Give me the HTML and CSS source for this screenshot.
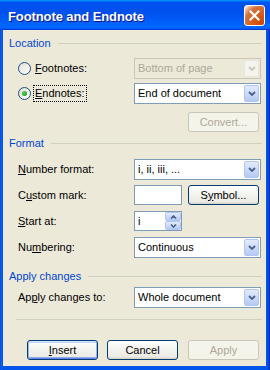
FILE: index.html
```html
<!DOCTYPE html>
<html>
<head>
<meta charset="utf-8">
<link rel="stylesheet" href="styles.css">
</head>
<body>
<div class="window">
  <div class="titlebar">
    <span class="title">Footnote and Endnote</span>
    <div class="close">
      <svg width="11" height="11" viewBox="0 0 11 11"><path d="M1.5 1.5 L9.5 9.5 M9.5 1.5 L1.5 9.5" stroke="#fff" stroke-width="2.2" stroke-linecap="square"/></svg>
    </div>
  </div>
  <div class="client">
    <div class="group-head"><span>Location</span><i class="rule"></i></div>
    <div class="row first">
      <div class="radio-label"><span class="radio"></span><span class="lbl"><u>F</u>ootnotes:</span></div>
      <div class="combo disabled"><span class="val">Bottom of page</span><span class="drop"><svg width="8" height="5" viewBox="0 0 8 5"><path d="M1 1 L4 4 L7 1" fill="none" stroke="#C9C7BA" stroke-width="1.8"/></svg></span></div>
    </div>
    <div class="row tight">
      <div class="radio-label"><span class="radio checked"></span><span class="lbl focus"><u>E</u>ndnotes:</span></div>
      <div class="combo"><span class="val">End of document</span><span class="drop"><svg width="8" height="5" viewBox="0 0 8 5"><path d="M1 1 L4 4 L7 1" fill="none" stroke="#4D6185" stroke-width="1.8"/></svg></span></div>
    </div>
    <div class="row convert-row">
      <span></span>
      <div class="btn disabled end">Convert...</div>
    </div>
    <div class="group-head format-head"><span>Format</span><i class="rule"></i></div>
    <div class="row numfmt">
      <span class="plain"><u>N</u>umber format:</span>
      <div class="combo"><span class="val">i, ii, iii, ...</span><span class="drop"><svg width="8" height="5" viewBox="0 0 8 5"><path d="M1 1 L4 4 L7 1" fill="none" stroke="#4D6185" stroke-width="1.8"/></svg></span></div>
    </div>
    <div class="row custom">
      <span class="plain">C<u>u</u>stom mark:</span>
      <div class="pair"><div class="textbox"></div><div class="btn symbol">S<u>y</u>mbol...</div></div>
    </div>
    <div class="row mid">
      <span class="plain"><u>S</u>tart at:</span>
      <div class="spinbox"><span class="val">i</span>
        <span class="spins">
          <span class="spin"><svg width="7" height="4" viewBox="0 0 7 4"><path d="M1 3.5 L3.5 1 L6 3.5" fill="none" stroke="#4D6185" stroke-width="1.6"/></svg></span>
          <span class="spin"><svg width="7" height="4" viewBox="0 0 7 4"><path d="M1 0.5 L3.5 3 L6 0.5" fill="none" stroke="#4D6185" stroke-width="1.6"/></svg></span>
        </span>
      </div>
    </div>
    <div class="row mid">
      <span class="plain">Nu<u>m</u>bering:</span>
      <div class="combo"><span class="val">Continuous</span><span class="drop"><svg width="8" height="5" viewBox="0 0 8 5"><path d="M1 1 L4 4 L7 1" fill="none" stroke="#4D6185" stroke-width="1.8"/></svg></span></div>
    </div>
    <div class="group-head apply-head"><span>Apply changes</span><i class="rule"></i></div>
    <div class="row tight">
      <span class="plain">Ap<u>p</u>ly changes to:</span>
      <div class="combo"><span class="val">Whole document</span><span class="drop"><svg width="8" height="5" viewBox="0 0 8 5"><path d="M1 1 L4 4 L7 1" fill="none" stroke="#4D6185" stroke-width="1.8"/></svg></span></div>
    </div>
    <div class="separator"></div>
    <div class="buttons">
      <div class="btn default"><u>I</u>nsert</div>
      <div class="btn">Cancel</div>
      <div class="btn disabled apply">Apply</div>
    </div>
  </div>
</div>
</body>
</html>
```
FILE: styles.css
```css
html, body {
  margin: 0;
  padding: 0;
  background: #0A57E8;
}
body {
  width: 270px;
  height: 370px;
  overflow: hidden;
  font-family: "Liberation Sans", Arial, sans-serif;
  font-size: 11px;
  color: #000;
}
.window {
  width: 270px;
  height: 370px;
  display: flex;
  flex-direction: column;
  background: linear-gradient(90deg, #0831D9 0, #166AEE 1px, #0055EA 2px, #0055EA 267px, #0848D8 268px, #0331C8 270px);
  box-sizing: border-box;
}
.titlebar {
  height: 30px;
  flex: none;
  display: flex;
  align-items: center;
  justify-content: space-between;
  background: linear-gradient(180deg, #0997FF 0, #0053EE 8%, #0050EE 40%, #0066FF 88%, #0066FF 93%, #005BFF 95%, #003DD7 96%, #003DD7 100%);
}
.title {
  margin-left: 8px;
  margin-top: 3px;
  color: #fff;
  font-weight: bold;
  font-size: 13px;
  letter-spacing: -0.1px;
  text-shadow: 1px 1px #0F1089;
}
.close {
  width: 21px;
  height: 21px;
  margin-right: 5px;
  box-sizing: border-box;
  border: 1px solid #fff;
  border-radius: 3px;
  background: radial-gradient(circle at 90% 90%, #CC4600 0%, #DC6527 55%, #CD7546 70%, #FFCCB2 90%, #FFFFFF 100%);
  display: flex;
  align-items: center;
  justify-content: center;
}
.client {
  flex: 1;
  margin: 0 4px 4px 3px;
  padding: 7px 4px 6px 6px;
  background: #ECE9D8;
  display: flex;
  flex-direction: column;
}
.group-head {
  display: flex;
  align-items: center;
  height: 13px;
  line-height: 13px;
  color: #0046D5;
}
.group-head .rule {
  flex: 1;
  height: 1px;
  background: #D0D0BF;
  margin-left: 7px;
}
.format-head { margin-top: 5px; }
.apply-head { margin-top: 12px; }
.row {
  display: grid;
  grid-template-columns: 116px 127px;
  align-items: center;
  margin-left: 9px;
  line-height: 13px;
}
.row.first { margin-top: 8px; }
.row.tight { margin-top: 4px; }
.row.convert-row { margin-top: 8px; }
.row.numfmt { margin-top: 9px; }
.row.custom { margin-top: 5px; }
.row.mid { margin-top: 6px; }
.radio-label {
  display: flex;
  align-items: center;
}
.radio {
  width: 13px;
  height: 13px;
  box-sizing: border-box;
  border: 1px solid #1C5180;
  border-radius: 50%;
  background: linear-gradient(135deg, #DCDCD7 0%, #F0F0EA 50%, #FFFFFF 100%);
  display: flex;
  align-items: center;
  justify-content: center;
}
.radio.checked::after {
  content: "";
  width: 5px;
  height: 5px;
  border-radius: 50%;
  background: radial-gradient(circle at 40% 40%, #55D551 0%, #21A121 70%, #1A8F1A 100%);
}
.lbl {
  margin-left: 2px;
  padding: 1px 1px;
  border: 1px dotted transparent;
}
.lbl.focus { border-color: #000; }
.combo {
  display: flex;
  align-items: center;
  height: 21px;
  box-sizing: border-box;
  border: 1px solid #7F9DB9;
  background: #fff;
}
.combo .val {
  flex: 1;
  padding-left: 3px;
  white-space: nowrap;
}
.drop {
  width: 15px;
  height: 17px;
  margin: 1px;
  box-sizing: border-box;
  border: 1px solid #B1C5F1;
  border-radius: 2px;
  background: linear-gradient(180deg, #E3EBFE 0%, #CCDAFA 50%, #B6C9F4 100%);
  display: flex;
  align-items: center;
  justify-content: center;
}
.combo.disabled {
  border-color: #C9C7BA;
  background: #ECE9D8;
  color: #ACA899;
}
.combo.disabled .drop {
  border-color: #E8E6DC;
  background: #F5F4EE;
}
.btn {
  width: 71px;
  height: 20px;
  box-sizing: border-box;
  border: 1px solid #003C74;
  border-radius: 3px;
  background: linear-gradient(180deg, #FFFFFF 0%, #F4F4F0 40%, #ECEBE6 86%, #D6D0C5 100%);
  display: flex;
  align-items: center;
  justify-content: center;
  line-height: 13px;
}
.btn.default {
  box-shadow: inset 0 1px #CEE7FF, inset 1px 0 #98B8EA, inset -1px 0 #98B8EA, inset 0 -1px #6982EE, inset 0 2px #BCD4F6, inset 0 -2px #89ADE4;
}
.btn.symbol {
  margin-left: 6px;
}
.btn.disabled {
  border-color: #C9C7BA;
  background: #F5F4EA;
  color: #ACA899;
}
.btn.end {
  justify-self: end;
  margin-right: 2px;
}
.pair {
  display: flex;
  align-items: center;
}
.textbox {
  width: 48px;
  height: 20px;
  box-sizing: border-box;
  border: 1px solid #7F9DB9;
  background: #fff;
}
.spinbox {
  width: 48px;
  height: 20px;
  box-sizing: border-box;
  border: 1px solid #7F9DB9;
  background: #fff;
  display: flex;
  align-items: center;
}
.spinbox .val {
  flex: 1;
  padding-left: 3px;
}
.spins {
  display: flex;
  flex-direction: column;
  width: 16px;
  height: 18px;
}
.spin {
  height: 9px;
  box-sizing: border-box;
  border: 1px solid #B1C5F1;
  border-radius: 2px;
  background: linear-gradient(180deg, #E3EBFE 0%, #B6C9F4 100%);
  display: flex;
  align-items: center;
  justify-content: center;
}
.separator {
  margin: 11px 0 0 7px;
  height: 1px;
  background: #D0D0BF;
}
.buttons {
  display: flex;
  margin: 20px 0 0 18px;
  gap: 9px;
}
.btn.apply { margin-left: 1px; }
u { text-decoration: underline; text-underline-offset: 1px; }
```
